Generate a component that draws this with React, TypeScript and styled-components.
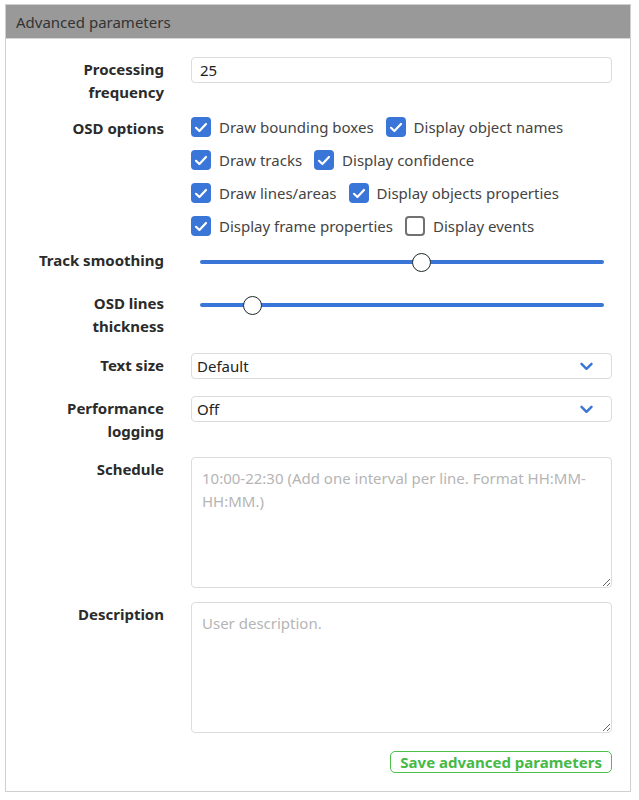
import styled, { createGlobalStyle } from "styled-components";
import { useState } from "react";

const GlobalStyle = createGlobalStyle`
  body {
    margin: 0;
    background: #fff;
    font-family: "Noto Sans", "Open Sans", sans-serif;
    color: #333;
  }
`;

const Card = styled.section`
  margin: 4px 8px 8px 5px;
  border: 1px solid #cfcfcf;
  background: #fff;
`;

const Header = styled.div`
  height: 33px;
  background: #999999;
  border-bottom: 1px solid #d6d6d6;
  padding: 0 10px;
  display: flex;
  align-items: center;
  font-size: 15px;
  color: #333;
`;

const Body = styled.div`
  padding: 18px 18px 18px 30px;
  display: flex;
  flex-direction: column;
`;

const Field = styled.div<{ $gap: number }>`
  display: grid;
  grid-template-columns: 128px 1fr;
  column-gap: 27px;
  align-items: start;
  margin-top: ${(p) => p.$gap}px;
`;

const Label = styled.label`
  text-align: right;
  font-weight: 700;
  font-size: 15px;
  line-height: 23px;
  padding-top: 1px;
  color: #2b2b2b;
`;

const TextInput = styled.input`
  box-sizing: border-box;
  width: 100%;
  height: 26px;
  border: 1px solid #dcdcdc;
  border-radius: 4px;
  padding: 0 8px;
  font: inherit;
  font-size: 15px;
  color: #222;
  outline: none;
`;

const CheckGroup = styled.div`
  display: flex;
  flex-direction: column;
  gap: 13px;
  padding-top: 1px;
`;

const CheckRow = styled.div`
  display: flex;
  gap: 12px;
`;

const CheckItem = styled.label`
  display: flex;
  align-items: center;
  gap: 8px;
  font-size: 15px;
  line-height: 20px;
  color: #444;
  white-space: nowrap;
`;

const Box = styled.span<{ $on: boolean }>`
  box-sizing: border-box;
  width: 20px;
  height: 20px;
  border-radius: 4px;
  display: inline-flex;
  align-items: center;
  justify-content: center;
  background: ${(p) => (p.$on ? "#3a76d8" : "#fff")};
  border: ${(p) => (p.$on ? "none" : "2px solid #717171")};
  flex-shrink: 0;
`;

const Range = styled.input`
  -webkit-appearance: none;
  appearance: none;
  width: calc(100% - 17px);
  margin: 5px 0 0 9px;
  height: 18px;
  background: transparent;

  &::-webkit-slider-runnable-track {
    height: 4px;
    border-radius: 2px;
    background: #3a76d8;
  }
  &::-webkit-slider-thumb {
    -webkit-appearance: none;
    box-sizing: border-box;
    width: 19px;
    height: 19px;
    margin-top: -7.5px;
    border-radius: 50%;
    background: #fff;
    border: 1.5px solid #1f2a2a;
  }
`;

const SelectWrap = styled.div`
  position: relative;
  height: 26px;
`;

const Select = styled.select`
  -webkit-appearance: none;
  appearance: none;
  box-sizing: border-box;
  width: 100%;
  height: 26px;
  border: 1px solid #dcdcdc;
  border-radius: 4px;
  padding: 0 30px 0 5px;
  background: #fff;
  font: inherit;
  font-size: 15px;
  color: #222;
  outline: none;
`;

const Chevron = styled.svg`
  position: absolute;
  right: 19px;
  top: 9px;
  pointer-events: none;
`;

const Area = styled.textarea`
  box-sizing: border-box;
  width: 100%;
  height: 131px;
  border: 1px solid #dcdcdc;
  border-radius: 4px;
  padding: 9px 10px;
  font: inherit;
  font-size: 15px;
  line-height: 23px;
  color: #222;
  outline: none;
  &::placeholder {
    color: #b5b5b5;
  }
`;

const Footer = styled.div`
  display: flex;
  justify-content: flex-end;
  margin-top: 18px;
`;

const SaveButton = styled.button`
  box-sizing: border-box;
  height: 22px;
  padding: 0 9px;
  border: 1.5px solid #4cbf4c;
  border-radius: 5px;
  background: #fff;
  color: #46b946;
  font: inherit;
  font-size: 15px;
  font-weight: 700;
  line-height: 18px;
  cursor: pointer;
`;

const Check = () => (
  <svg width="14" height="11" viewBox="0 0 14 11">
    <path d="M2 5.8 L5.4 9 L12 2" fill="none" stroke="#fff" strokeWidth="2.2" strokeLinecap="round" strokeLinejoin="round" />
  </svg>
);

const Option = ({ text, on }: { text: string; on: boolean }) => (
  <CheckItem>
    <Box $on={on}>{on && <Check />}</Box>
    {text}
  </CheckItem>
);

const DropDown = ({ value, options }: { value: string; options: string[] }) => (
  <SelectWrap>
    <Select defaultValue={value}>
      {options.map((o) => (
        <option key={o}>{o}</option>
      ))}
    </Select>
    <Chevron width="13" height="9" viewBox="0 0 13 9">
      <path d="M1.5 1.8 L6.5 6.8 L11.5 1.8" fill="none" stroke="#3a76d8" strokeWidth="2.4" strokeLinecap="round" strokeLinejoin="round" />
    </Chevron>
  </SelectWrap>
);

const osdRows: [string, boolean][][] = [
  [["Draw bounding boxes", true], ["Display object names", true]],
  [["Draw tracks", true], ["Display confidence", true]],
  [["Draw lines/areas", true], ["Display objects properties", true]],
  [["Display frame properties", true], ["Display events", false]],
];

export default function App() {
  const [smoothing, setSmoothing] = useState(55);
  const [thickness, setThickness] = useState(2);

  return (
    <>
      <GlobalStyle />
      <Card>
        <Header>Advanced parameters</Header>
        <Body>
          <Field $gap={0}>
            <Label>Processing frequency</Label>
            <TextInput defaultValue="25" />
          </Field>

          <Field $gap={12}>
            <Label>OSD options</Label>
            <CheckGroup>
              {osdRows.map((row, i) => (
                <CheckRow key={i}>
                  {row.map(([t, on]) => (
                    <Option key={t} text={t} on={on} />
                  ))}
                </CheckRow>
              ))}
            </CheckGroup>
          </Field>

          <Field $gap={12}>
            <Label>Track smoothing</Label>
            <Range
              type="range"
              min={0}
              max={100}
              value={smoothing}
              onChange={(e) => setSmoothing(Number(e.target.value))}
            />
          </Field>

          <Field $gap={19}>
            <Label>OSD lines thickness</Label>
            <Range
              type="range"
              min={1}
              max={10}
              value={thickness}
              onChange={(e) => setThickness(Number(e.target.value))}
            />
          </Field>

          <Field $gap={15}>
            <Label>Text size</Label>
            <DropDown value="Default" options={["Default", "Small", "Large"]} />
          </Field>

          <Field $gap={17}>
            <Label>Performance logging</Label>
            <DropDown value="Off" options={["Off", "On"]} />
          </Field>

          <Field $gap={14}>
            <Label>Schedule</Label>
            <Area placeholder="10:00-22:30 (Add one interval per line. Format HH:MM-HH:MM.)" />
          </Field>

          <Field $gap={14}>
            <Label>Description</Label>
            <Area placeholder="User description." />
          </Field>

          <Footer>
            <SaveButton>Save advanced parameters</SaveButton>
          </Footer>
        </Body>
      </Card>
    </>
  );
}
